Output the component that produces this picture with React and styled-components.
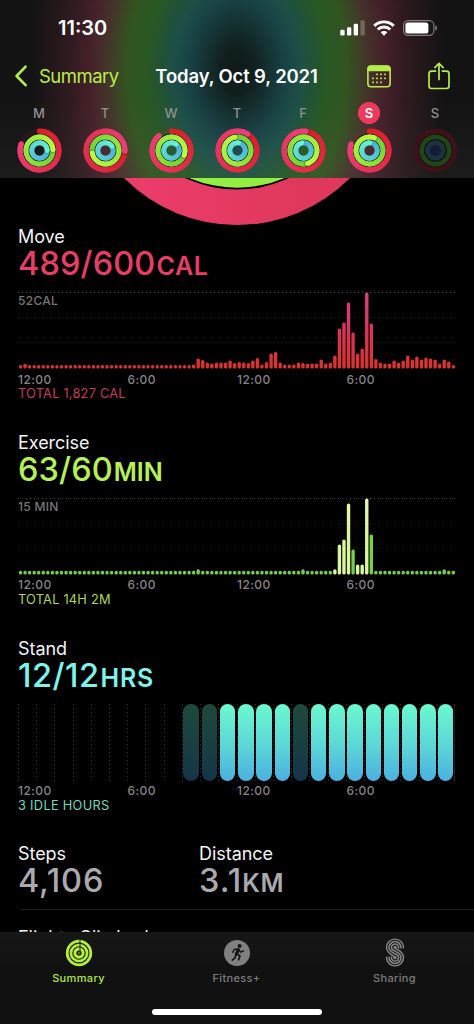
import styled, { createGlobalStyle } from "styled-components";

const GlobalStyle = createGlobalStyle`
  body {
    margin: 0;
    background: #000;
    font-family: Inter, "Liberation Sans", sans-serif;
    overflow: hidden;
  }
`;

const Phone = styled.div`
  display: flex;
  flex-direction: column;
  width: 474px;
  height: 1024px;
  overflow: hidden;
  background: #000;
`;

const Header = styled.header`
  flex: none;
  height: 178px;
  background: linear-gradient(to bottom, transparent 55%, rgba(255, 255, 255, 0.04)),
    radial-gradient(
      ellipse 208px 310px at 237px 70px,
      #10191b 0,
      #11201f 8%,
      #184043 22%,
      #1d4f48 30%,
      #275722 43%,
      #325420 53%,
      #44332a 63%,
      #452129 71%,
      #2c191e 83%,
      #131313 100%
    );
`;

const StatusBar = styled.div`
  display: flex;
  justify-content: space-between;
  align-items: center;
  height: 56px;
  padding: 0 36px 0 58px;
  color: #fff;
`;

const Clock = styled.span`
  font-size: 20px;
  font-weight: 600;
  letter-spacing: 0;
`;

const StatusIcons = styled.div`
  display: flex;
  align-items: center;
  gap: 8px;
`;

const NavBar = styled.nav`
  display: grid;
  grid-template-columns: 141px 1fr 140px;
  align-items: center;
  height: 40px;
`;

const Back = styled.div`
  display: flex;
  align-items: center;
  gap: 12px;
  padding-left: 15px;
  color: #b5ee4a;
  font-size: 18.5px;
  letter-spacing: -0.5px;
`;

const Title = styled.h1`
  margin: 0 2px 0 0;
  color: #fff;
  font-size: 18.5px;
  font-weight: 600;
  text-align: center;
  white-space: nowrap;
  letter-spacing: -0.15px;
`;

const NavActions = styled.div`
  display: flex;
  align-items: center;
  justify-content: flex-end;
  gap: 37px;
  padding-right: 24px;
`;

const Week = styled.div`
  display: grid;
  grid-template-columns: repeat(7, 66px);
  padding-left: 6px;
  padding-top: 5px;
`;

const Day = styled.div`
  display: flex;
  flex-direction: column;
  align-items: center;
  gap: 3px;
`;

const DayLetter = styled.span`
  width: 22px;
  height: 24px;
  line-height: 24px;
  text-align: center;
  font-size: 13px;
  font-weight: ${(p) => (p.$active ? 600 : 500)};
  color: ${(p) => (p.$active ? "#fff" : "#8f9290")};
  background: ${(p) => (p.$active ? "radial-gradient(circle, #ec3a5d 10.7px, transparent 11.3px)" : "none")};
`;

const RingPeek = styled.div`
  flex: none;
  height: 47px;
`;

const Content = styled.main`
  flex: 1;
  min-height: 0;
  overflow: hidden;
  padding-left: 18px;
`;

const Section = styled.section`
  height: 205.8px;
  width: 437px;
`;

const Name = styled.div`
  height: 23px;
  line-height: 24px;
  font-size: 18px;
  color: #f4f4f4;
  letter-spacing: -0.05px;
`;

const Value = styled.div`
  height: 32.5px;
  line-height: 32.5px;
  margin-bottom: 11.8px;
  font-size: 32.5px;
  font-weight: 500;
  letter-spacing: ${(p) => p.$spacing || "0.1px"};
  color: ${(p) => p.$color};
  white-space: nowrap;
`;

const Unit = styled.span`
  margin-left: ${(p) => p.$gap || "1px"};
  font-size: 25px;
  font-weight: 600;
  letter-spacing: ${(p) => p.$spacing || "0.7px"};
`;

const dotted = "repeating-linear-gradient(to right, #444 0 1px, transparent 1px 4px)";
const dottedDim = "repeating-linear-gradient(to right, #242424 0 1px, transparent 1px 4px)";

const BarChart = styled.div`
  display: grid;
  grid-template: 76.7px / 1fr;
  background: ${dotted} 0 0 / 100% 1px no-repeat, ${dottedDim} 0 25px / 100% 1px no-repeat,
    ${dottedDim} 0 50px / 100% 1px no-repeat;
`;

// the axis caption shares its cell with the bars
const Peak = styled.span`
  grid-area: 1 / 1;
  padding-top: 1px;
  line-height: 15px;
  font-size: 12px;
  font-weight: 500;
  letter-spacing: 0.3px;
  color: #77777a;
`;

const Bars = styled.svg`
  grid-area: 1 / 1;
  display: block;
  width: 437px;
  height: 77px;
`;

const HourChart = styled.div`
  display: grid;
  grid-template-columns: repeat(24, 1fr);
  height: 76.7px;
`;

const Hour = styled.div`
  padding: 0 1.2px 0 1.6px;
  background: repeating-linear-gradient(to bottom, #363636 0 1px, transparent 1px 4px) left / 1px 100% no-repeat;

  &:last-child {
    border-right: 1px dotted #333;
  }
`;

const Capsule = styled.div`
  height: 100%;
  border-radius: 8px;
  background: ${(p) =>
    p.$idle ? "linear-gradient(#1e493c, #193f42 55%, #143549)" : "linear-gradient(#6cf9cf, #5cd6d8 55%, #4bb0df)"};
`;

const Times = styled.div`
  display: grid;
  grid-template-columns: repeat(4, 109.5px);
  height: 15.6px;
  line-height: 16px;
  padding-top: 2.7px;
  font-size: 12px;
  font-weight: 500;
  letter-spacing: 0.45px;
  color: #858588;
`;

const Total = styled.div`
  height: 14px;
  line-height: 14px;
  font-size: 12.8px;
  letter-spacing: ${(p) => p.$spacing || "0.22px"};
  color: ${(p) => p.$color};
`;

const Stats = styled.div`
  display: grid;
  grid-template-columns: 181px 1fr;
  height: 67px;
`;

const Divider = styled.div`
  height: 1px;
  margin: 0 0 16px 2px;
  background: #1c1c1e;
`;

const TabBar = styled.footer`
  flex: none;
  display: flex;
  flex-direction: column;
  align-items: center;
  height: 92px;
  background: linear-gradient(#171717, #111 40%, #111);
`;

const Tabs = styled.div`
  display: grid;
  grid-template-columns: repeat(3, 158px);
  height: 77px;
`;

const Tab = styled.div`
  display: grid;
  grid-template-rows: 29px 20px;
  justify-items: center;
  align-items: center;
  align-content: start;
  padding: 6px 1px 0 0;
  row-gap: 1px;
  font-size: 11px;
  font-weight: 500;
  line-height: 20px;
  letter-spacing: 0.35px;
  color: ${(p) => (p.$active ? "#b2e83c" : "#7c7c7c")};
`;

const HomeIndicator = styled.div`
  width: 170px;
  height: 5.5px;
  border-radius: 3px;
  background: #fff;
`;

const COLORS = {
  move: [[216, 32, 40], [238, 62, 122]],
  exercise: [[112, 208, 56], [190, 250, 66]],
  stand: [[76, 176, 216], [104, 240, 214]],
};

const mix = ([from, to], t) => `rgb(${from.map((c, i) => Math.round(c + (to[i] - c) * t)).join(",")})`;

const point = (r, deg) => {
  const a = ((deg - 90) * Math.PI) / 180;
  return [22.5 + r * Math.cos(a), 22.5 + r * Math.sin(a)];
};

const Arc = ({ r, w, colors, from, sweep }) => {
  const steps = 48;
  const pieces = [];
  for (let i = 0; i < steps; i++) {
    const [x1, y1] = point(r, from + (sweep * i) / steps);
    // each piece runs under the next one so that no seam shows
    const [x2, y2] = point(r, from + (sweep * (i + 1)) / steps + (i < steps - 1 ? 6 : 0));
    pieces.push(
      <path key={i} d={`M${x1} ${y1}A${r} ${r} 0 0 1 ${x2} ${y2}`} stroke={mix(colors, i / steps)} strokeWidth={w} />
    );
  }
  const [sx, sy] = point(r, from);
  const [ex, ey] = point(r, from + sweep);
  const [hx, hy] = point(r, from + sweep + 4);
  return (
    <g fill="none">
      {sweep < 360 && <circle cx={sx} cy={sy} r={w / 2} fill={mix(colors, 0)} />}
      {pieces}
      {sweep === 360 && <circle cx={hx} cy={hy} r={w / 2} fill="#000" opacity="0.3" />}
      <circle cx={ex} cy={ey} r={w / 2} fill={mix(colors, 1)} />
    </g>
  );
};

// move is a partial sweep or, once closed, the angle of the ring's head
const DayRings = ({ move, closed, exercise, stand }) => (
  <svg width="45" height="45" viewBox="0 0 45 45">
    <circle cx="22.5" cy="22.5" r="19.4" fill="none" stroke="#d02040" strokeOpacity="0.1" strokeWidth="5.2" />
    <circle cx="22.5" cy="22.5" r="16.4" fill="none" stroke="#000" strokeOpacity="0.6" strokeWidth="1.2" />
    <circle cx="22.5" cy="22.5" r="10.7" fill="none" stroke="#000" strokeOpacity="0.8" strokeWidth="1.6" />
    <Arc r={19.4} w={5.2} colors={COLORS.move} from={closed ? move : 0} sweep={closed ? 360 : move} />
    <Arc r={13.5} w={4.9} colors={COLORS.exercise} from={exercise} sweep={360} />
    <Arc r={7.7} w={4.9} colors={COLORS.stand} from={stand} sweep={360} />
  </svg>
);

const EmptyRings = () => (
  <svg width="45" height="45" viewBox="0 0 45 45" fill="none" strokeWidth="5.2">
    <circle cx="22.5" cy="22.5" r="16.4" stroke="#0a0a0a" strokeWidth="1.2" />
    <circle cx="22.5" cy="22.5" r="19.4" stroke="#3d1119" />
    <circle cx="22.5" cy="22.5" r="13.5" stroke="#234417" />
    <circle cx="22.5" cy="22.5" r="10.7" stroke="#0b130b" strokeWidth="1.3" />
    <circle cx="22.5" cy="22.5" r="7.7" stroke="#1a3340" />
    <circle cx="22.5" cy="22.5" r="5.4" fill="#171b36" />
  </svg>
);

const week = [
  { letter: "M", move: 290, exercise: 88, stand: 92 },
  { letter: "T", move: 92, closed: true, exercise: 260, stand: 60 },
  { letter: "W", move: 320, exercise: 112, stand: 40 },
  { letter: "T", move: 33, closed: true, exercise: 350, stand: 10 },
  { letter: "F", move: 8, closed: true, exercise: 163, stand: 350 },
  { letter: "S", move: 289, exercise: 22, stand: 5, active: true },
  { letter: "S", future: true },
];

// 15 minute buckets, heights in px
const moveBars = [
  3.4, 4.8, ...Array(36).fill(3.4), 4, 10, 8.5, 6, 5, 6, 6, 6, 8, 5.5, 6.5, 6, 5.5, 8, 10.5, 4, 6.5, 15, 16.5, 6, 4, 4,
  4, 6, 5.5, 5, 5, 5, 9, 5, 6, 13, 40, 46, 66, 36, 15, 20, 76, 45, 9.5, 6, 5, 5, 8, 6, 8, 13, 9, 12, 9, 11, 10, 9, 5,
  9, 7, 3.4,
];

const exerciseBars = Array(96).fill(3.7);
Object.entries({ 39: 5.2, 62: 5.2, 69: 5.2, 70: 30, 71: 35, 72: 71, 73: 25, 74: 10, 75: 10, 76: 76, 77: 40, 93: 5.2 }).forEach(
  ([i, h]) => (exerciseBars[i] = h)
);
const intense = [69, 70, 71, 72, 74, 75, 76];

const moveFill = () => "url(#moveFill)";
const exerciseFill = (i) => (intense.includes(i) ? "url(#intenseFill)" : "url(#exerciseFill)");

const TimeAxis = () => (
  <Times>
    <span>12:00</span>
    <span>6:00</span>
    <span>12:00</span>
    <span>6:00</span>
  </Times>
);

const ChartFill = ({ id, stops }) => (
  <linearGradient id={id} gradientUnits="userSpaceOnUse" x1="0" y1="0" x2="0" y2="76">
    {stops.map((color, i) => (
      <stop key={color} offset={i / (stops.length - 1)} stopColor={color} />
    ))}
  </linearGradient>
);

const Chart = ({ bars, peak, fill, children }) => (
  <BarChart>
    <Peak>{peak}</Peak>
    <Bars viewBox="0 0 437 77">
      <defs>{children}</defs>
      {bars.map((h, i) => (
        <rect key={i} x={0.8 + i * 4.556} y={76.5 - h} width="3.4" height={h} rx="1.6" fill={fill(i)} />
      ))}
    </Bars>
  </BarChart>
);

const SignalIcon = () => (
  <svg width="25" height="16" viewBox="0 0 25 16" fill="#fff">
    <rect x="0.3" y="9.8" width="4.3" height="5.7" rx="1.2" />
    <rect x="7" y="7.3" width="4.3" height="8.2" rx="1.2" />
    <rect x="13.7" y="3.8" width="4.3" height="11.7" rx="1.2" />
    <rect x="20.4" y="0.3" width="4.3" height="15.2" rx="1.2" opacity="0.25" />
  </svg>
);

const WifiIcon = () => (
  <svg width="22" height="16" viewBox="0 0 22 16" fill="none" stroke="#fff" strokeWidth="2.9">
    <path d="M1.2 5.9A14 14 0 0 1 20.8 5.9" />
    <path d="M4.7 9.5A9 9 0 0 1 17.3 9.5" />
    <path d="M11 15.7L7.6 12.3A4.9 4.9 0 0 1 14.4 12.3Z" fill="#fff" stroke="none" />
  </svg>
);

const BatteryIcon = () => (
  <svg width="35" height="16" viewBox="0 0 35 16">
    <rect x="0.6" y="0.6" width="30.3" height="14.8" rx="4.6" fill="none" stroke="#fff" strokeOpacity="0.45" strokeWidth="1.1" />
    <rect x="2.4" y="2.4" width="23" height="11.2" rx="2.6" fill="#fff" />
    <path d="M32.3 5.4C34.6 6 34.6 10 32.3 10.6Z" fill="#fff" opacity="0.45" />
  </svg>
);

const ChevronIcon = () => (
  <svg width="12" height="22" viewBox="0 0 12 22" fill="none" stroke="currentColor" strokeWidth="2.6" strokeLinecap="round" strokeLinejoin="round">
    <path d="M10.6 1.6L1.6 11L10.6 20.2" />
  </svg>
);

const CalendarIcon = () => (
  <svg width="24" height="23" viewBox="0 0 24 23">
    <rect x="0.9" y="1" width="22.2" height="20.8" rx="3" fill="none" stroke="#b5ee4a" strokeWidth="1.6" />
    <path d="M0.5 6.3V4Q0.5 0.5 4 0.5H20Q23.5 0.5 23.5 4V6.3Z" fill="#b5ee4a" />
    {[[10, 9.3], [14, 9.3], [18, 9.3], [6, 13.3], [10, 13.3], [14, 13.3], [18, 13.3], [6, 17.3], [10, 17.3], [14, 17.3]].map(
      ([x, y]) => (
        <rect key={`${x}-${y}`} x={x - 0.9} y={y - 0.9} width="1.8" height="1.8" rx="0.4" fill="#b5ee4a" />
      )
    )}
  </svg>
);

const ShareIcon = () => (
  <svg width="22" height="28" viewBox="0 0 22 28" fill="none" stroke="#b5ee4a" strokeWidth="1.7" strokeLinecap="round" strokeLinejoin="round">
    <path d="M7.6 9.1H3.6Q1 9.1 1 11.7V23.8Q1 26.5 3.6 26.5H18.4Q21 26.5 21 23.8V11.7Q21 9.1 18.4 9.1H14.4" />
    <path d="M11 17.5V1.6M6.8 5.6L11 1.4L15.2 5.6" />
  </svg>
);

const SummaryIcon = () => (
  <svg width="28" height="28" viewBox="0 0 28 28">
    <circle cx="14" cy="14" r="13.2" fill="#b5ee3e" />
    <g fill="none" stroke="#1b2508">
      <circle cx="14" cy="14" r="9.9" strokeWidth="1.1" />
      <circle cx="14" cy="14" r="6.2" strokeWidth="1.1" />
      <circle cx="14" cy="14" r="1.7" strokeWidth="1.8" />
      <path d="M15 1V13" strokeWidth="1" />
    </g>
  </svg>
);

const FitnessIcon = () => (
  <svg width="26" height="26" viewBox="0 0 26 26">
    <circle cx="13" cy="13" r="13" fill="#808080" />
    <circle cx="15.6" cy="6" r="2" fill="#141414" />
    <g fill="none" stroke="#141414" strokeLinecap="round" strokeLinejoin="round">
      <path d="M14.2 9.8L12.4 14" strokeWidth="3.2" />
      <path d="M13.6 9L10.2 9.4L8.8 12.4" strokeWidth="1.4" />
      <path d="M14.8 9.6L16.6 12.2L19.6 10.8" strokeWidth="1.4" />
      <path d="M13 14L16 16L14.6 19.8" strokeWidth="1.7" />
      <path d="M11.8 14.4L11.2 17.6L8.4 20.2" strokeWidth="1.7" />
    </g>
  </svg>
);

const sPath =
  "M14.8 10.2V9.6A4.8 4.8 0 0 0 5.2 9.6C5.2 14.8 14.8 14.2 14.8 19.4A4.8 4.8 0 0 1 5.2 19.4V18.8";

const SharingIcon = () => (
  <svg width="20" height="29" viewBox="0 0 20 29" fill="none">
    <path d={sPath} stroke="#868686" strokeWidth="8.8" />
    <path d={sPath} stroke="#161616" strokeWidth="5.9" />
    <path d={sPath} stroke="#868686" strokeWidth="4" />
    <path d={sPath} stroke="#161616" strokeWidth="1" />
  </svg>
);

const App = () => (
  <Phone>
    <GlobalStyle />
    <Header>
      <StatusBar>
        <Clock>11:30</Clock>
        <StatusIcons>
          <SignalIcon />
          <WifiIcon />
          <BatteryIcon />
        </StatusIcons>
      </StatusBar>
      <NavBar>
        <Back>
          <ChevronIcon />
          Summary
        </Back>
        <Title>Today, Oct 9, 2021</Title>
        <NavActions>
          <CalendarIcon />
          <ShareIcon />
        </NavActions>
      </NavBar>
      <Week>
        {week.map(({ letter, active, future, ...rings }, i) => (
          <Day key={i}>
            <DayLetter $active={active}>{letter}</DayLetter>
            {future ? <EmptyRings /> : <DayRings {...rings} />}
          </Day>
        ))}
      </Week>
    </Header>

    <RingPeek>
      <svg width="474" height="47" viewBox="0 0 474 47" display="block">
        <defs>
          <linearGradient id="bigRing" x1="0" x2="1">
            <stop offset="0.2" stopColor="#ea3d6a" />
            <stop offset="0.7" stopColor="#e0385c" />
          </linearGradient>
        </defs>
        <circle cx="237" cy="-112" r="159" fill="url(#bigRing)" />
        <circle cx="237" cy="-112" r="123.5" fill="#000" />
        <circle cx="237" cy="-112" r="121.7" fill="#93ee42" />
      </svg>
    </RingPeek>

    <Content>
      <Section>
        <Name>Move</Name>
        <Value $color="#e83e65">
          489/600<Unit>CAL</Unit>
        </Value>
        <Chart bars={moveBars} peak="52CAL" fill={moveFill}>
          <ChartFill id="moveFill" stops={["#dc3f85", "#d93458", "#dc322c"]} />
        </Chart>
        <TimeAxis />
        <Total $color="#c93a5e">TOTAL 1,827 CAL</Total>
      </Section>

      <Section>
        <Name>Exercise</Name>
        <Value $color="#b5f058">
          63/60<Unit $spacing="0">MIN</Unit>
        </Value>
        <Chart bars={exerciseBars} peak="15 MIN" fill={exerciseFill}>
          <ChartFill id="intenseFill" stops={["#e6f6b4", "#d8f59a", "#dcf6a0"]} />
          <ChartFill id="exerciseFill" stops={["#7ad843", "#72cf46"]} />
        </Chart>
        <TimeAxis />
        <Total $color="#acd654">TOTAL 14H 2M</Total>
      </Section>

      <Section>
        <Name>Stand</Name>
        <Value $color="#7df4ea" $spacing="0.5px">
          12/12<Unit>HRS</Unit>
        </Value>
        <HourChart>
          {Array.from({ length: 24 }, (_, i) => (
            <Hour key={i}>{i > 8 && <Capsule $idle={[9, 10, 15].includes(i)} />}</Hour>
          ))}
        </HourChart>
        <TimeAxis />
        <Total $color="#6fd8bd" $spacing="0.3px">
          3 IDLE HOURS
        </Total>
      </Section>

      <Stats>
        <div>
          <Name>Steps</Name>
          <Value $color="#a9a9ae" $spacing="0.8px">
            4,106
          </Value>
        </div>
        <div>
          <Name>Distance</Name>
          <Value $color="#a9a9ae" $spacing="1px">
            3.1<Unit $gap="0">KM</Unit>
          </Value>
        </div>
      </Stats>
      <Divider />
      <Name>Flights Climbed</Name>
    </Content>

    <TabBar>
      <Tabs>
        <Tab $active>
          <SummaryIcon />
          Summary
        </Tab>
        <Tab>
          <FitnessIcon />
          Fitness+
        </Tab>
        <Tab>
          <SharingIcon />
          Sharing
        </Tab>
      </Tabs>
      <HomeIndicator />
    </TabBar>
  </Phone>
);

export default App;
